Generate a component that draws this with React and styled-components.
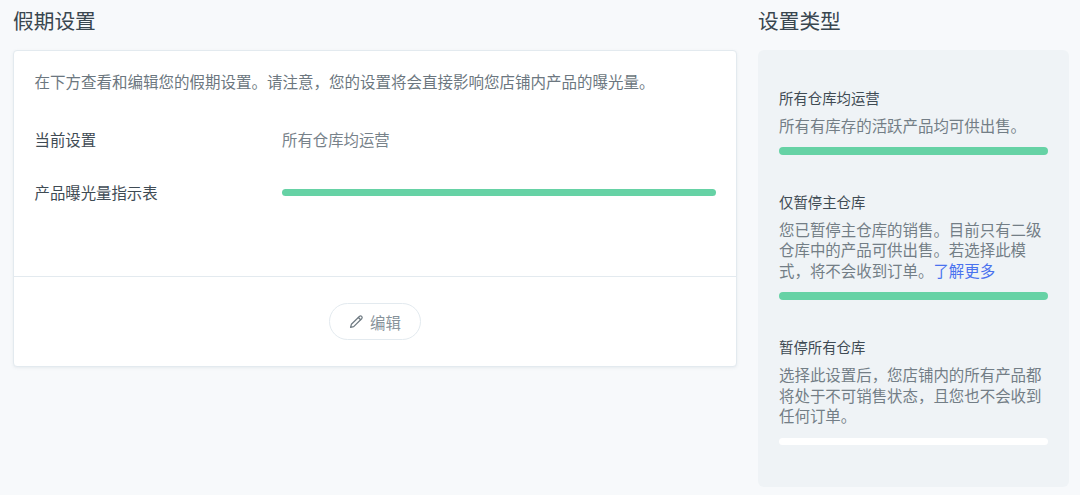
import React from "react";
import styled, { createGlobalStyle } from "styled-components";

const Global = createGlobalStyle`
  html, body { margin: 0; padding: 0; background: #f7f9fb; }
  body { font-family: "Noto Sans CJK SC", "Noto Sans", sans-serif; }
`;

const Page = styled.div`
  width: 1080px;
  height: 495px;
  overflow: hidden;
  display: flex;
  gap: 21px;
  padding: 0 11px 8px 13px;
  box-sizing: border-box;
  background: #f7f9fb;
`;

const Main = styled.section`
  width: 724px;
  display: flex;
  flex-direction: column;
`;

const Aside = styled.aside`
  width: 311px;
  display: flex;
  flex-direction: column;
`;

const Heading = styled.h2`
  margin: 0;
  height: 50px;
  padding-top: 5px;
  box-sizing: border-box;
  font-size: 20.7px;
  line-height: 30px;
  font-weight: 400;
  color: #39464f;
`;

const Card = styled.div`
  height: 317px;
  background: #fff;
  border: 1px solid #e3eaef;
  border-radius: 4px;
  box-shadow: 0 1px 3px rgba(120, 140, 155, 0.12);
  display: flex;
  flex-direction: column;
  box-sizing: border-box;
`;

const CardBody = styled.div`
  height: 226px;
  padding: 17px 21px 0 20.5px;
  box-sizing: border-box;
  border-bottom: 1px solid #e3eaef;
`;

const Intro = styled.p`
  margin: 0 0 32px;
  font-size: 15.5px;
  line-height: 26px;
  color: #6c7780;
`;

const Row = styled.div`
  display: grid;
  grid-template-columns: 247.5px 434px;
  align-items: center;
  height: 26px;
  margin-bottom: 27px;
`;

const Label = styled.span`
  font-size: 15.4px;
  line-height: 26px;
  color: #3f4b54;
`;

const Value = styled.span`
  font-size: 15.4px;
  line-height: 26px;
  color: #77828a;
`;

const Bar = styled.div`
  height: ${(p) => p.$h || 7}px;
  margin-top: ${(p) => p.$top || 0}px;
  border-radius: 4px;
  background: ${(p) => (p.$on ? "#66d2a5" : "#ffffff")};
`;

const CardFoot = styled.div`
  flex: 1;
  display: flex;
  align-items: center;
  justify-content: center;
`;

const EditButton = styled.button`
  width: 92px;
  height: 37px;
  display: flex;
  align-items: center;
  justify-content: center;
  gap: 6px;
  background: #fff;
  border: 1px solid #e3eaef;
  border-radius: 19px;
  color: #87929a;
  font-family: inherit;
  font-size: 15.4px;
  padding: 0;
`;

const Panel = styled.div`
  height: 437px;
  background: #eff3f6;
  border-radius: 6px;
  padding: 35px 21px 0;
  box-sizing: border-box;
  display: flex;
  flex-direction: column;
  gap: 34px;
`;

const Type = styled.div`
  display: flex;
  flex-direction: column;
`;

const TypeTitle = styled.div`
  font-size: 14.4px;
  line-height: 26px;
  color: #3f4b54;
`;

const TypeText = styled.p`
  margin: 4px 0 11px;
  font-size: 15.45px;
  line-height: 20.7px;
  color: #737e86;
`;

const Link = styled.a`
  color: #4a72ef;
  text-decoration: none;
`;

const Pencil = () => (
  <svg width="15" height="15" viewBox="0 0 24 24" fill="none" stroke="#6f7a82" strokeWidth="2" strokeLinecap="round" strokeLinejoin="round">
    <path d="M17 3.5a2.6 2.6 0 0 1 3.6 3.6L7.5 20.2 2.5 21.5l1.3-5z" />
    <path d="M15 5.5l3.6 3.6" />
  </svg>
);

export default function App() {
  return (
    <>
      <Global />
      <Page>
        <Main>
          <Heading>假期设置</Heading>
          <Card>
            <CardBody>
              <Intro>在下方查看和编辑您的假期设置。请注意，您的设置将会直接影响您店铺内产品的曝光量。</Intro>
              <Row>
                <Label>当前设置</Label>
                <Value>所有仓库均运营</Value>
              </Row>
              <Row>
                <Label>产品曝光量指示表</Label>
                <Bar $on $h={7} />
              </Row>
            </CardBody>
            <CardFoot>
              <EditButton>
                <Pencil />
                编辑
              </EditButton>
            </CardFoot>
          </Card>
        </Main>
        <Aside>
          <Heading>设置类型</Heading>
          <Panel>
            <Type>
              <TypeTitle>所有仓库均运营</TypeTitle>
              <TypeText>所有有库存的活跃产品均可供出售。</TypeText>
              <Bar $on $h={8} />
            </Type>
            <Type>
              <TypeTitle>仅暂停主仓库</TypeTitle>
              <TypeText>
                您已暂停主仓库的销售。目前只有二级仓库中的产品可供出售。若选择此模式，将不会收到订单。<Link>了解更多</Link>
              </TypeText>
              <Bar $on $h={8} />
            </Type>
            <Type>
              <TypeTitle>暂停所有仓库</TypeTitle>
              <TypeText>选择此设置后，您店铺内的所有产品都将处于不可销售状态，且您也不会收到任何订单。</TypeText>
              <Bar $h={7} $top={1} />
            </Type>
          </Panel>
        </Aside>
      </Page>
    </>
  );
}
